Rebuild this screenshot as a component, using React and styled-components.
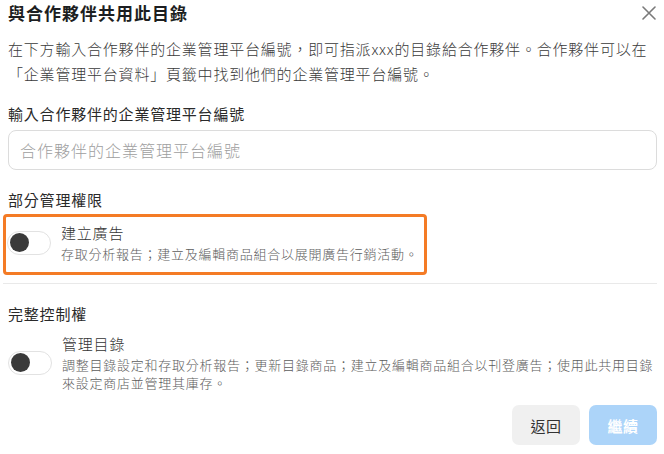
import React from "react";
import styled, { createGlobalStyle } from "styled-components";

const Global = createGlobalStyle`
  html, body { margin: 0; padding: 0; background: #fff; }
  body { font-family: "Noto Sans CJK TC", "Noto Sans", sans-serif; }
  * { box-sizing: border-box; }
`;

const Dialog = styled.div`
  width: 664px;
  height: 454px;
  padding: 0 7px 0 8px;
  display: flex;
  flex-direction: column;
  background: #fff;
  color: #1c1e21;
`;

const Header = styled.div`
  height: 26px;
  display: flex;
  align-items: center;
  justify-content: space-between;
`;

const Title = styled.h1`
  margin: 0;
  font-size: 17px;
  line-height: 26px;
  font-weight: 700;
  letter-spacing: 1px;
  color: #1c1e21;
`;

const CloseButton = styled.button`
  border: 0;
  background: none;
  padding: 0;
  width: 16px;
  height: 16px;
  display: flex;
  align-items: center;
  justify-content: center;
`;

const Description = styled.p`
  margin: 10px 0 0;
  font-size: 15px;
  line-height: 25px;
  letter-spacing: 0.8px;
  font-weight: 300;
  color: #3a3a3a;
`;

const SectionLabel = styled.div`
  margin-top: ${(p) => p.$top}px;
  font-size: 15px;
  line-height: 22px;
  letter-spacing: 0.8px;
  font-weight: 400;
  color: #2a2a2a;
`;

const Input = styled.input`
  margin-top: 5px;
  width: 100%;
  height: 40px;
  border: 1px solid #dcdcdc;
  border-radius: 8px;
  padding: 0 11px;
  font-family: inherit;
  font-size: 16px;
  font-weight: 300;
  letter-spacing: 1px;
  color: #333;
  outline: none;
  &::placeholder { color: #9e9e9e; }
`;

const PermissionRow = styled.div`
  display: flex;
  align-items: center;
  gap: 10px;
  width: fit-content;
  margin-top: ${(p) => p.$top}px;
  margin-left: ${(p) => (p.$highlight ? -5 : 0)}px;
  padding: ${(p) => (p.$highlight ? "5px 5px 9px 1px" : "0")};
  border: ${(p) => (p.$highlight ? "3px solid #f47b25" : "0")};
  border-radius: 4px;
`;

const Track = styled.span`
  flex: none;
  width: 44px;
  height: 24px;
  border-radius: 12px;
  border: 1px solid #e2e2e2;
  background: #fff;
  display: flex;
  align-items: center;
  padding-left: 2px;
`;

const Knob = styled.span`
  width: 19px;
  height: 19px;
  border-radius: 50%;
  background: #3a3a3a;
`;

const PermText = styled.div`
  display: flex;
  flex-direction: column;
`;

const PermTitle = styled.div`
  font-size: 15px;
  line-height: 22px;
  letter-spacing: 0.8px;
  font-weight: 300;
  color: #333;
`;

const PermDesc = styled.div`
  margin-top: 1px;
  font-size: 13px;
  line-height: 18px;
  letter-spacing: 0.75px;
  font-weight: 300;
  color: #5c5c5c;
`;

const Divider = styled.hr`
  margin: 8px 0 0 -5px;
  border: 0;
  height: 1px;
  background: #e9e9e9;
`;

const Footer = styled.div`
  margin-top: 13px;
  display: flex;
  justify-content: flex-end;
  gap: 9px;
`;

const Button = styled.button`
  width: 68px;
  height: 40px;
  border: 0;
  border-radius: 7px;
  font-family: inherit;
  font-size: 15px;
  letter-spacing: 0.5px;
  font-weight: ${(p) => (p.$primary ? 700 : 400)};
  background: ${(p) => (p.$primary ? "#acd4f9" : "#f0f0f0")};
  color: ${(p) => (p.$primary ? "#fff" : "#333")};
`;

function Toggle() {
  return (
    <Track>
      <Knob />
    </Track>
  );
}

export default function App() {
  return (
    <>
      <Global />
      <Dialog>
        <Header>
          <Title>與合作夥伴共用此目錄</Title>
          <CloseButton aria-label="close">
            <svg width="14" height="14" viewBox="0 0 14 14">
              <path d="M1 1L13 13M13 1L1 13" stroke="#7a7a7a" strokeWidth="1.6" strokeLinecap="round" />
            </svg>
          </CloseButton>
        </Header>
        <Description>
          在下方輸入合作夥伴的企業管理平台編號，即可指派xxx的目錄給合作夥伴。合作夥伴可以在
          <br />
          「企業管理平台資料」頁籤中找到他們的企業管理平台編號。
        </Description>
        <SectionLabel $top={17}>輸入合作夥伴的企業管理平台編號</SectionLabel>
        <Input placeholder="合作夥伴的企業管理平台編號" />
        <SectionLabel $top={19}>部分管理權限</SectionLabel>
        <PermissionRow $highlight $top={3}>
          <Toggle />
          <PermText>
            <PermTitle>建立廣告</PermTitle>
            <PermDesc>存取分析報告；建立及編輯商品組合以展開廣告行銷活動。</PermDesc>
          </PermText>
        </PermissionRow>
        <Divider />
        <SectionLabel $top={19}>完整控制權</SectionLabel>
        <PermissionRow $top={8}>
          <Toggle />
          <PermText>
            <PermTitle>管理目錄</PermTitle>
            <PermDesc>
              調整目錄設定和存取分析報告；更新目錄商品；建立及編輯商品組合以刊登廣告；使用此共用目錄
              <br />
              來設定商店並管理其庫存。
            </PermDesc>
          </PermText>
        </PermissionRow>
        <Footer>
          <Button>返回</Button>
          <Button $primary>繼續</Button>
        </Footer>
      </Dialog>
    </>
  );
}
